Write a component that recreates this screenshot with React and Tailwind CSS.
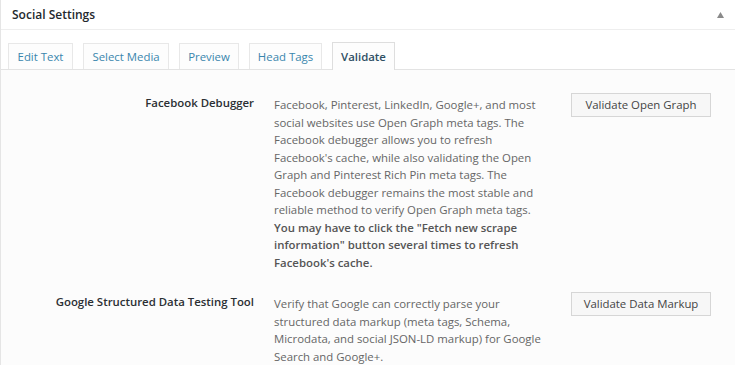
import React from "react";

const font = { fontFamily: '"Open Sans", "Noto Sans", sans-serif' };

function Tab({ label, active, w }) {
  return (
    <div
      className={
        "flex items-center justify-center border border-b-0 text-[11.4px] leading-none " +
        (active
          ? "h-[28px] bg-[#fdfdfd] border-[#dedede] text-[#2f4f63] font-semibold -mb-px"
          : "h-[26px] bg-[#fdfdfd] border-[#e8e8e8] text-[#3a86ad]")
      }
      style={{ width: w }}
    >
      {label}
    </div>
  );
}

function Row({ label, button, children }) {
  return (
    <div className="flex items-start">
      <div className="w-[253px] shrink-0 text-right text-[11.4px] font-semibold text-[#2b2f33] pt-[1px] leading-[17.5px]">
        {label}
      </div>
      <div className="w-[272px] shrink-0 ml-[20px] pt-[3px] text-[11.4px] leading-[17.5px] text-[#666]">
        {children}
      </div>
      <div className="ml-[25px] shrink-0">
        <div className="h-[24px] w-[140px] border border-[#d6d6d6] bg-[#f7f7f7] flex items-center justify-center text-[11.4px] text-[#444]">
          {button}
        </div>
      </div>
    </div>
  );
}

export default function App() {
  return (
    <div style={font} className="w-[735px] h-[365px] bg-white overflow-hidden border-l border-[#e5e5e5]">
      <div className="h-[30px] flex items-center justify-between pl-[11px] pr-[11px] border-b border-[#eeeeee]">
        <div className="text-[12px] font-semibold text-[#23282d]">Social Settings</div>
        <svg width="7" height="6" viewBox="0 0 7 6">
          <polygon points="3.5,0 7,6 0,6" fill="#8a8a8a" />
        </svg>
      </div>
      <div className="pt-[12px] pl-[7px] flex items-end border-b border-[#e3e3e3]">
        <div className="flex items-end gap-[10px]">
          <Tab label="Edit Text" w={65} />
          <Tab label="Select Media" w={86} />
          <Tab label="Preview" w={60} />
          <Tab label="Head Tags" w={73} />
          <Tab label="Validate" w={63} active />
        </div>
      </div>
      <div className="bg-[#fcfcfc] pt-[23px] flex flex-col gap-[21px] h-full">
        <Row label="Facebook Debugger" button="Validate Open Graph">
          Facebook, Pinterest, LinkedIn, Google+, and most social websites use Open Graph meta tags. The Facebook debugger allows you to refresh Facebook's cache, while also validating the Open Graph and Pinterest Rich Pin meta tags. The Facebook debugger remains the most stable and reliable method to verify Open Graph meta tags.{" "}
          <span className="font-semibold text-[#555]">
            You may have to click the "Fetch new scrape information" button several times to refresh Facebook's cache.
          </span>
        </Row>
        <Row label="Google Structured Data Testing Tool" button="Validate Data Markup">
          Verify that Google can correctly parse your structured data markup (meta tags, Schema, Microdata, and social JSON-LD markup) for Google Search and Google+.
        </Row>
      </div>
    </div>
  );
}
